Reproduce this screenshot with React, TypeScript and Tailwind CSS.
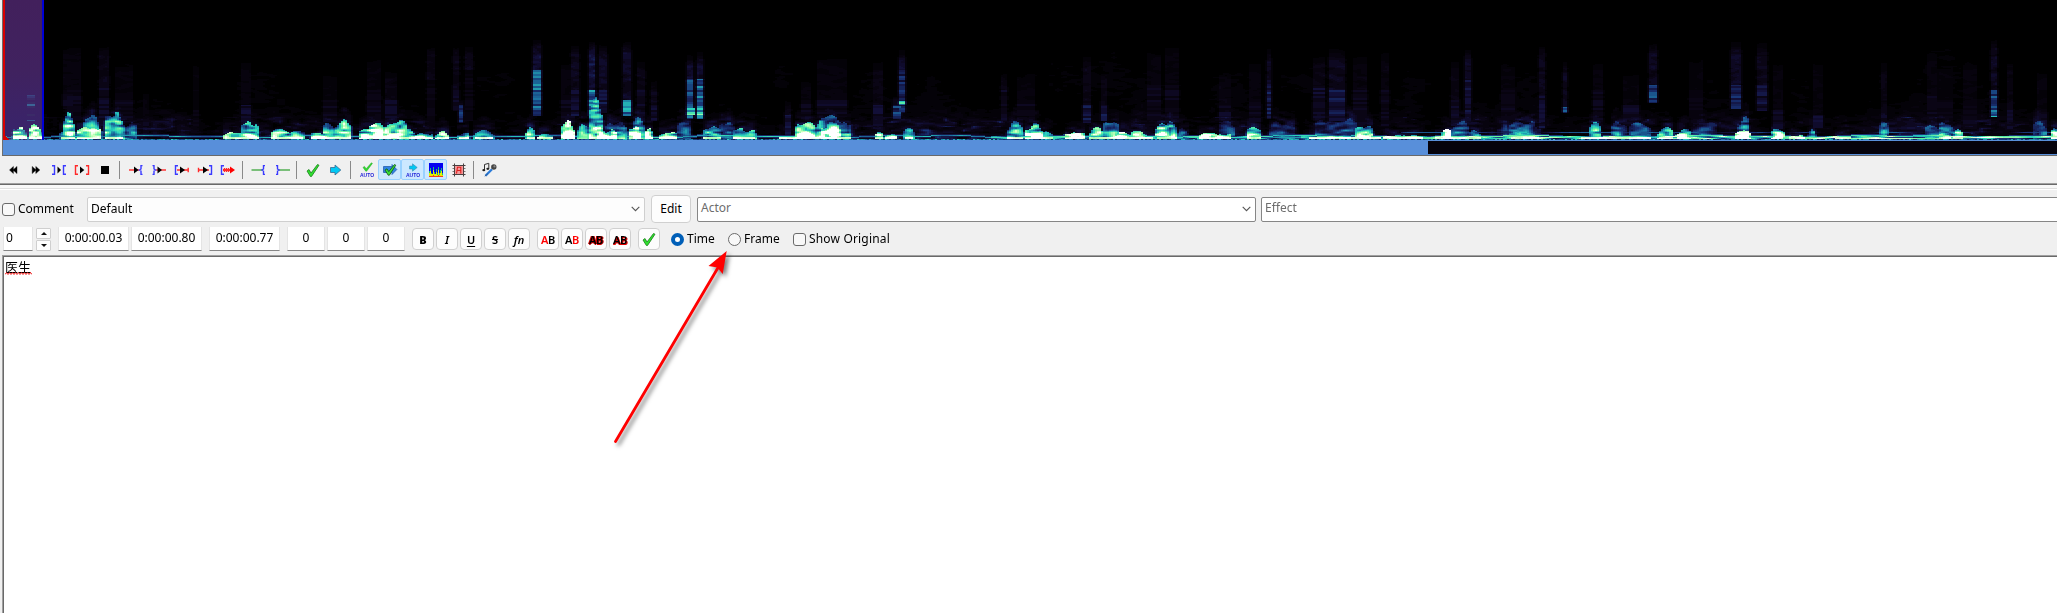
import React, { useMemo } from "react";
import { clsx } from "clsx";

/* ---------- spectrogram ---------- */

// [left, right, top, strength] of voiced bursts rising from the bottom edge
const BURSTS: number[][] = [
  [14, 26, 125, 1.1], [30, 41, 122, 1.25], [61, 75, 128, 0.85], [65, 73, 108, 0.85], [78, 100, 125, 1.1], [84, 98, 114, 0.6], [106, 123, 111, 0.72], [125, 136, 119, 0.5],
  [225, 242, 131, 1.2], [243, 258, 120, 0.85], [272, 288, 129, 0.9], [288, 303, 130, 0.8],
  [312, 324, 131, 1.1], [324, 334, 120, 0.8], [336, 350, 119, 0.85], [361, 372, 129, 1.1], [371, 381, 120, 1.2], [385, 405, 118, 0.95], [404, 413, 128, 0.8],
  [416, 431, 132, 1], [437, 448, 130, 0.9], [459, 468, 132, 0.9], [475, 493, 130, 0.65], [527, 534, 127, 0.9], [538, 552, 134, 0.9],
  [563, 573, 119, 1.15], [578, 588, 122, 0.6], [590, 602, 100, 0.75], [597, 604, 127, 1.2], [606, 616, 129, 1.4], [606, 623, 119, 0.45],
  [618, 627, 122, 0.6], [630, 640, 126, 1.2], [634, 644, 118, 0.55], [646, 652, 127, 1.2], [660, 676, 131, 1], [678, 690, 119, 0.42],
  [704, 720, 127, 0.7], [720, 733, 121, 0.45], [734, 755, 128, 0.9], [780, 850, 135, 0.9], [797, 813, 120, 0.9], [816, 849, 114, 0.65], [822, 840, 123, 1.35],
  [876, 882, 131, 1], [885, 896, 133, 1.1], [905, 913, 125, 0.65],
  [1008, 1022, 121, 0.65], [1026, 1042, 128, 1.2], [1032, 1040, 122, 0.9], [1043, 1052, 131, 0.8], [1066, 1084, 131, 1.3], [1090, 1101, 126, 0.95], [1104, 1118, 118, 0.6],
  [1102, 1152, 135, 1], [1118, 1128, 130, 1.2], [1132, 1144, 129, 0.85], [1157, 1174, 121, 0.95], [1166, 1176, 116, 0.65], [1179, 1188, 127, 0.45], [1200, 1230, 132, 1.3],
  [1220, 1234, 121, 0.42], [1248, 1260, 124, 0.8], [1270, 1294, 120, 0.36], [1316, 1355, 117, 0.42], [1310, 1380, 136, 0.9], [1356, 1372, 125, 0.95], [1384, 1422, 134, 0.75],
  [1442, 1450, 128, 1.4], [1451, 1468, 120, 0.45], [1436, 1468, 136, 1], [1470, 1480, 128, 0.75],
  [1498, 1510, 123, 0.35], [1511, 1540, 120, 0.48], [1511, 1538, 131, 0.85], [1591, 1600, 119, 0.75], [1612, 1626, 119, 0.45], [1630, 1650, 119, 0.5],
  [1582, 1650, 136, 1.1], [1659, 1672, 127, 0.95], [1678, 1689, 127, 1.15], [1693, 1715, 119, 0.38], [1737, 1749, 128, 1.45], [1739, 1748, 115, 0.5],
  [1773, 1783, 128, 0.9], [1790, 1804, 134, 0.9], [1809, 1815, 129, 0.6], [1836, 1851, 136, 1.2], [1881, 1888, 119, 0.5],
  [1926, 1936, 124, 0.5], [1938, 1953, 121, 0.5], [1940, 1950, 130, 1], [1954, 1962, 129, 0.85], [2034, 2046, 119, 0.45], [2052, 2058, 128, 0.9],
];

// [centre, half width, top, bottom, faint strength, hot top, hot strength]
const STREAKS: number[][] = [
  [31, 3, 60, 120, 0.22, 95, 0.36], [68, 4, 45, 108, 0.08, 90, 0.12], [74, 6, 45, 120, 0.09, 90, 0.12], [104, 5, 45, 125, 0.12, 85, 0.15], [124, 8, 60, 122, 0.07, 100, 0.12],
  [146, 3, 90, 135, 0.09, 120, 0.13], [196, 3, 60, 130, 0.06, 110, 0.1], [246, 4, 60, 125, 0.08, 105, 0.18], [330, 6, 70, 122, 0.06, 100, 0.12],
  [374, 6, 55, 122, 0.07, 90, 0.12], [391, 6, 70, 122, 0.1, 100, 0.16], [431, 4, 45, 125, 0.12, 80, 0.1], [456, 3, 45, 110, 0.12, 90, 0.15],
  [461, 2, 98, 122, 0.18, 105, 0.3], [469, 4, 45, 120, 0.12, 70, 0.1], [537, 3, 40, 115, 0.21, 70, 0.44], [568, 6, 60, 125, 0.08, 95, 0.12],
  [575, 3, 45, 115, 0.14, 90, 0.2], [592, 3, 42, 115, 0.24, 90, 0.5], [603, 3, 45, 112, 0.17, 90, 0.22], [627, 3, 42, 115, 0.17, 100, 0.48],
  [641, 3, 60, 120, 0.12, 90, 0.14], [654, 2, 80, 120, 0.12, 105, 0.18], [690.5, 3, 55, 118, 0.18, 79, 0.44], [700, 3, 52, 118, 0.18, 79, 0.44],
  [690.5, 4, 108, 114, 0.75, 108, 0.8], [700, 3, 106, 114, 0.7, 108, 0.66], [788, 2, 100, 135, 0.12, 115, 0.2], [806, 5, 75, 118, 0.07, 100, 0.12],
  [832, 14, 55, 116, 0.08, 100, 0.14], [878, 4, 60, 125, 0.1, 105, 0.18], [902, 3, 50, 112, 0.19, 70, 0.28], [902, 3, 101, 104, 0.6, 101, 0.65], [897, 3, 97, 118, 0.24, 105, 0.34],
  [1004, 2, 70, 120, 0.1, 90, 0.14], [1026, 8, 70, 120, 0.07, 100, 0.11], [1087, 3, 55, 122, 0.11, 105, 0.25], [1104, 3, 70, 120, 0.11, 105, 0.22],
  [1154, 7, 50, 125, 0.08, 85, 0.11], [1172, 6, 45, 122, 0.08, 85, 0.12], [1225, 6, 70, 122, 0.09, 105, 0.14], [1255, 6, 60, 125, 0.08, 100, 0.12],
  [1269, 2, 48, 118, 0.14, 80, 0.25], [1319, 6, 55, 120, 0.11, 85, 0.16], [1337, 7, 48, 120, 0.14, 90, 0.22], [1360, 7, 55, 125, 0.09, 90, 0.12],
  [1385, 4, 50, 125, 0.09, 90, 0.12], [1455, 4, 60, 125, 0.1, 100, 0.16], [1468, 3, 48, 120, 0.14, 80, 0.2], [1508, 7, 60, 125, 0.07, 90, 0.11],
  [1542, 2, 45, 128, 0.13, 95, 0.19], [1565, 2, 60, 112, 0.14, 107, 0.42], [1598, 5, 60, 125, 0.08, 90, 0.12], [1631, 8, 70, 125, 0.07, 105, 0.14],
  [1653, 4, 42, 102, 0.15, 85, 0.4], [1696, 7, 55, 125, 0.06, 90, 0.1], [1736, 4, 42, 108, 0.16, 85, 0.28], [1762, 4, 42, 110, 0.13, 85, 0.2],
  [1778, 4, 60, 128, 0.08, 110, 0.16], [1818, 4, 60, 128, 0.07, 115, 0.16], [1884, 3, 60, 135, 0.1, 115, 0.16], [1932, 4, 50, 128, 0.08, 95, 0.12],
  [1945, 7, 60, 125, 0.06, 100, 0.1], [1970, 6, 60, 128, 0.08, 105, 0.12], [1994, 3, 40, 116, 0.16, 90, 0.36], [1994, 3, 106, 116, 0.4, 110, 0.52],
  [2010, 3, 60, 128, 0.1, 110, 0.16], [2042, 5, 70, 128, 0.08, 110, 0.15],
];

const STOPS: [number, number, number, number][] = [
  [0, 0, 0, 0], [0.1, 9, 4, 18], [0.2, 18, 14, 54], [0.32, 24, 50, 116], [0.45, 28, 114, 160],
  [0.6, 40, 208, 190], [0.74, 106, 244, 160], [0.86, 205, 255, 190], [0.95, 255, 255, 255], [1, 255, 255, 255],
];

const LEVELS = 32;

function colourOf(v: number): string {
  let i = 1;
  while (i < STOPS.length - 1 && STOPS[i][0] < v) i++;
  const a = STOPS[i - 1];
  const b = STOPS[i];
  const t = Math.min(1, Math.max(0, (v - a[0]) / (b[0] - a[0])));
  const c = [1, 2, 3].map((k) => Math.round(a[k] + (b[k] - a[k]) * t));
  return `rgb(${c[0]},${c[1]},${c[2]})`;
}

function noise(a: number, b: number): number {
  let h = Math.imul(a + 71, 374761393) ^ Math.imul(b + 13, 668265263);
  h = Math.imul(h ^ (h >>> 13), 1274126177);
  return ((h ^ (h >>> 16)) >>> 0) / 4294967296;
}

function smooth(x: number, y: number, salt: number): number {
  const xi = Math.floor(x);
  const yi = Math.floor(y);
  const fx = x - xi;
  const fy = y - yi;
  const top = noise(xi + salt, yi) * (1 - fx) + noise(xi + 1 + salt, yi) * fx;
  const low = noise(xi + salt, yi + 1) * (1 - fx) + noise(xi + 1 + salt, yi + 1) * fx;
  return top * (1 - fy) + low * fy;
}

const CELL = 2;

function buildPaths(): string[] {
  const paths: string[] = Array.from({ length: LEVELS }, () => "");
  for (let x = 5; x < 2057; x += CELL) {
    const cx = x + 1;
    const bursts = BURSTS.filter((b) => cx >= b[0] - 6 && cx <= b[1] + 6);
    const voiced = bursts.some((b) => cx >= b[0] && cx <= b[1] && b[3] > 0.6);
    const streaks = STREAKS.filter((s) => Math.abs(cx - s[0]) <= s[1] + 2);
    let runLevel = 0;
    let runStart = 0;
    const flush = (y: number) => {
      if (runLevel > 0) paths[runLevel] += `M${x} ${runStart}h${CELL}V${y}h-${CELL}z`;
    };
    for (let y = 0; y < 140; y++) {
      const depth = y / 140;
      const cloud = smooth(x / 30, y / 40, 900);
      const grain = smooth(x / 7, y / 2.2, 300);
      let v = y > 45 ? 0.1 * depth * cloud * cloud * (0.3 + grain) : 0;
      if (y > 108) v += (0.24 * (y - 108) * cloud * grain) / 32;
      if (y > 116) {
        const wisp = smooth(x / 9, y / 1.8, 5000);
        if (wisp > 0.68) v += (wisp - 0.68) * 0.7 * cloud;
      }
      for (const s of streaks) {
        if (y < s[2] || y > s[3]) continue;
        const edge = Math.abs(cx - s[0]) <= s[1] ? 1 : 0.3;
        const fade = Math.min(1, (y - s[2]) / 14 + 0.2);
        const row = Math.floor(y / 2);
        const base = y >= s[5] ? s[6] * (0.55 + 0.65 * noise(Math.round(s[0]), row)) : s[4] * fade * (0.5 + 0.7 * grain);
        v = Math.max(v, base * edge);
      }
      for (const b of bursts) {
        const mid = (b[0] + b[1]) / 2;
        const half = (b[1] - b[0]) / 2;
        const d = Math.abs(cx - mid) / (half + 1);
        const contour = b[2] + (smooth(x / 4, b[2], 50) - 0.3 + 0.7 * d * d) * (140 - b[2]) * 0.4;
        const inside = d <= 1 ? 1 - 0.15 * d * d : Math.max(0, 0.5 - (d - 1) * 1.2);
        if (y >= contour) {
          const rise = 0.62 + (0.55 * (y - contour)) / Math.max(3, 140 - contour);
          v = Math.max(v, b[3] * inside * rise * (0.4 + 1.15 * grain));
        } else if (y >= contour - 14) {
          v = Math.max(v, 0.3 * inside * grain * (1 - (contour - y) / 18));
        }
      }
      // low-frequency hum along the bottom edge, denser towards the right
      if (y >= 131) {
        const line = 136 + Math.round(0.9 * Math.sin(x / 31) + 0.6 * Math.sin(x / 13));
        const near = Math.abs(y - line);
        const dense = x > 1400 ? 1.25 : x > 990 ? 1.1 : x > 560 && x < 850 ? 1.1 : 0.9;
        if (near < 1) v = Math.max(v, 0.58 * dense * (0.75 + 0.4 * smooth(x / 16, 2, 20)));
        else if (near < 2) v = Math.max(v, 0.26 * dense);
        if (y >= 136 && y < 139 && x > 990) v = Math.max(v, (x > 1300 ? 0.85 : 0.6) * smooth(x / 14, y, 66) + 0.14);
        if (x > 1400 && y === 132) v = Math.max(v, 0.5 * smooth(x / 22, 7, 10));
        if (y >= 137 && y < 139 && voiced) v = Math.max(v, 0.8 + 0.25 * grain);
        if (y === 139) v = 0.25 + 0.35 * noise(x, 9);
      }
      const level = Math.min(LEVELS - 1, Math.floor(Math.min(1, v) * LEVELS));
      if (level !== runLevel) {
        flush(y);
        runLevel = level;
        runStart = y;
      }
    }
    flush(140);
  }
  return paths;
}

function Spectrogram() {
  const paths = useMemo(buildPaths, []);
  return (
    <svg className="block h-[140px] w-[2055px] shrink-0" viewBox="2 0 2055 140" shapeRendering="crispEdges">
      <defs>
        <linearGradient id="selection" x1="0" y1="0" x2="0" y2="1">
          <stop offset="0" stopColor="#42205c" />
          <stop offset="0.5" stopColor="#40225f" />
          <stop offset="1" stopColor="#38246c" />
        </linearGradient>
      </defs>
      <rect x="2" y="0" width="2055" height="140" fill="#000" />
      {paths.map((d, i) =>
        d ? <path key={i} d={d} fill={colourOf((i + 0.5) / LEVELS)} /> : null
      )}
      <rect x="5" y="0" width="37" height="140" fill="url(#selection)" className="mix-blend-lighten" />
      <rect x="2" y="0" width="1" height="140" fill="#6e6e6e" />
      <path d="M3 0H5V135L9 140H3z" fill="#d80000" />
      <rect x="42" y="0" width="2" height="140" fill="#0000d8" />
    </svg>
  );
}

/* ---------- toolbar icons ---------- */

const BLUE = "#3a3aff";
const RED = "#ff2a2a";

function Icon({ children }: { children: React.ReactNode }) {
  return (
    <svg className="block h-4 w-4" viewBox="0 0 16 16" fill="none">
      {children}
    </svg>
  );
}

// square bracket opening towards dir
function Bracket({ x, dir, color }: { x: number; dir: 1 | -1; color: string }) {
  return <path d={`M${x + 3 * dir} 3.8H${x + 0.5 * dir}V12.2H${x + 3 * dir}`} stroke={color} strokeWidth="1.4" />;
}

// curly bracket whose nib points away from dir
function Brace({ x, dir, color }: { x: number; dir: 1 | -1; color: string }) {
  return (
    <path
      d={`M${x + 2 * dir} 3.6H${x + dir * 0.5}V7L${x - dir} 8L${x + dir * 0.5} 9V12.4H${x + 2 * dir}`}
      stroke={color}
      strokeWidth="1.4"
    />
  );
}

const tick = "M2 9L4 7.5L6 11L12.5 2.5L14 3.2L6.5 14.5H5.4z";

const ICONS: Record<string, React.ReactNode> = {
  back: <path d="M4.5 8L8.4 4.4V11.6zM8 8L12 4.4V11.6z" fill="#000" stroke="#000" strokeWidth=".4" />,
  forward: <path d="M8 8L4.2 4.4V11.6zM11.8 8L7.8 4.4V11.6z" fill="#000" stroke="#000" strokeWidth=".4" />,
  playOutside: (
    <>
      <Bracket x={4} dir={-1} color={BLUE} />
      <Bracket x={12} dir={1} color={BLUE} />
      <path d="M6.5 4.5L10 8L6.5 11.5z" fill="#000" />
    </>
  ),
  playInside: (
    <>
      <Bracket x={1} dir={1} color={RED} />
      <Bracket x={15} dir={-1} color={RED} />
      <path d="M6 4.5L10.3 8L6 11.5z" fill="#000" />
    </>
  ),
  stop: <rect x="4" y="4" width="8" height="8" fill="#000" />,
  beforeStart: (
    <>
      <path d="M1 8H11" stroke={RED} strokeWidth="1.4" />
      <path d="M6 4.5L10.5 8L6 11.5z" fill="#000" />
      <Brace x={12.5} dir={1} color={BLUE} />
    </>
  ),
  afterEnd: (
    <>
      <path d="M5 8H15" stroke={RED} strokeWidth="1.4" />
      <path d="M6.5 4.5L11 8L6.5 11.5z" fill="#000" />
      <Brace x={3.5} dir={-1} color={BLUE} />
    </>
  ),
  afterStart: (
    <>
      <Bracket x={1} dir={1} color={BLUE} />
      <path d="M3 8H14M14.2 5.8V10.2" stroke={RED} strokeWidth="1.4" />
      <path d="M6 4.5L11 8L6 11.5z" fill="#000" />
    </>
  ),
  beforeEnd: (
    <>
      <path d="M1.5 8H12M1.5 5.8V10.2" stroke={RED} strokeWidth="1.4" />
      <path d="M6 4.5L11 8L6 11.5z" fill="#000" />
      <Bracket x={15} dir={-1} color={BLUE} />
    </>
  ),
  toEnd: (
    <>
      <Bracket x={1} dir={1} color={BLUE} />
      <path d="M3 8H12" stroke={RED} strokeWidth="2.2" />
      <path d="M4.5 6V10M6.5 6V10M8.5 6V10" stroke={RED} strokeWidth="1.2" />
      <path d="M10 4.5L15 8L10 11.5z" fill="#ff0000" />
    </>
  ),
  leadIn: (
    <>
      <path d="M.5 8H11.5" stroke="#3aa53a" strokeWidth="1.3" />
      <Brace x={12} dir={1} color={BLUE} />
    </>
  ),
  leadOut: (
    <>
      <path d="M4.5 8H16" stroke="#3aa53a" strokeWidth="1.3" />
      <Brace x={4} dir={-1} color={BLUE} />
    </>
  ),
  commit: <path d={tick} fill="#2fe02f" stroke="#1b7c1b" strokeWidth=".8" />,
  next: <path d="M2.5 5.5H7V3L12.8 8L7 13V10.5H2.5z" fill="#00c8f4" stroke="#3a6a90" strokeWidth=".8" />,
  autoCommit: (
    <>
      <path d="M4 5.4L5.5 4.4L7.2 6.8L12.4 .8L13.4 1.4L7.6 9.2H6.8z" fill="#2fe02f" stroke="#2a9a2a" strokeWidth=".5" />
      <text x="8" y="15" textAnchor="middle" fill="#2222d8" fontSize="5" fontWeight="700" fontFamily="Liberation Sans, sans-serif">AUTO</text>
    </>
  ),
  commitNext: (
    <>
      <path d="M1.5 4.5H10V2.5L14.8 7.5L10 12.5V10.5H1.5z" fill="#2f86e4" stroke="#2a5fae" strokeWidth=".8" />
      <path d="M3 8L5 6.8L6.8 9.6L12.5 2.5L13.8 3.2L7.4 13.2H6.2z" fill="#38e038" stroke="#145214" strokeWidth=".8" />
    </>
  ),
  autoScroll: (
    <>
      <path d="M4.5 4H7.5V1.8L12.2 5.5L7.5 9.2V7H4.5z" fill="#00c8f4" stroke="#3a8ab0" strokeWidth=".6" />
      <text x="8" y="15" textAnchor="middle" fill="#2222d8" fontSize="5" fontWeight="700" fontFamily="Liberation Sans, sans-serif">AUTO</text>
    </>
  ),
  spectrum: (
    <g shapeRendering="crispEdges">
      <rect x="1" y="1" width="14" height="14" fill="#0000f0" />
      <path d="M1 15V9H2V6H3V11H4V12H5V5H6V10H7V12H8V7H9V11H10V5H11V11H12V8H13V6H14V11H15V15z" fill="#18c070" />
      <path d="M1 15V11H2V9H3V12H5V8H6V12H8V10H9V13H10V8H11V13H12V11H13V9H14V13H15V15z" fill="#e8f000" />
      <path d="M1 15V14H5V13H6V14H10V13H11V14H15V15z" fill="#f04020" />
    </g>
  ),
  crop: (
    <>
      <rect x="4" y="4" width="8" height="8" fill="#f49a9a" />
      <path d="M3.5 1.5V14.5M12.5 1.5V14.5M1.5 3.5H14.5M1.5 12.5H14.5" stroke="#4a4040" strokeWidth="1" />
      <path d="M1.5 6.5H3M1.5 9.5H3M13 6.5H14.5M13 9.5H14.5" stroke="#6a5a5a" strokeWidth=".8" />
      <path d="M5.5 11.5L6.5 5.2H9.8V11.5M6.2 8.5H9.8" stroke="#e02020" strokeWidth="1.1" />
    </>
  ),
  karaoke: (
    <>
      <path d="M2.5 8V2.5L6.8 1.3V6.5" stroke="#333" strokeWidth="1" />
      <ellipse cx="1.8" cy="8.2" rx="1.5" ry="1.1" fill="#222" />
      <ellipse cx="5.8" cy="6.8" rx="1.5" ry="1.1" fill="#222" />
      <path d="M3.5 13.8L10 7.2" stroke="#2a7ad8" strokeWidth="2.2" />
      <path d="M2.8 14.2L6 11.6" stroke="#2f5f9a" strokeWidth="1" />
      <circle cx="11.8" cy="5" r="2.7" fill="#444" />
      <circle cx="12.5" cy="4.4" r="1.1" fill="#8a8a8a" />
    </>
  ),
};

const TOOL_GROUPS: string[][] = [
  ["back", "forward", "playOutside", "playInside", "stop"],
  ["beforeStart", "afterEnd", "afterStart", "beforeEnd", "toEnd"],
  ["leadIn", "leadOut"],
  ["commit", "next"],
  ["autoCommit", "commitNext", "autoScroll", "spectrum", "crop"],
  ["karaoke"],
];

const ACTIVE = ["commitNext", "autoScroll", "spectrum"];

function Toolbar() {
  return (
    <div className="flex h-[27px] shrink-0 items-center pl-px">
      {TOOL_GROUPS.map((group, g) => (
        <React.Fragment key={g}>
          {g > 0 && <div className="ml-[3px] mr-[4px] h-[18px] w-px bg-[#8a8a8a]" />}
          {group.map((name) => (
            <button
              key={name}
              className={clsx(
                "flex h-[21px] w-[23px] items-center justify-center rounded-[2px] border",
                ACTIVE.includes(name) ? "border-[#99d1ff] bg-[#cce8ff]" : "border-transparent"
              )}
            >
              <Icon>{ICONS[name]}</Icon>
            </button>
          ))}
        </React.Fragment>
      ))}
    </div>
  );
}

/* ---------- edit box ---------- */

function Chevron() {
  return (
    <svg className="h-[6px] w-[9px]" viewBox="0 0 9 6" fill="none">
      <path d="M.7.9L4.5 4.7L8.3.9" stroke="#555" strokeWidth="1.1" />
    </svg>
  );
}

function Field({ value, className }: { value: string; className: string }) {
  return (
    <div className={clsx("flex h-[24px] shrink-0 items-center border-x border-b border-x-[#e4e4e4] border-b-[#868686] bg-white pb-px", className)}>
      {value}
    </div>
  );
}

function Tool({ children, className }: { children: React.ReactNode; className?: string }) {
  return (
    <button
      className={clsx(
        "flex h-[22px] w-[22px] items-center justify-center rounded-[4px] border border-[#d0d0d0] bg-[#fdfdfd] text-[11px] leading-none",
        className
      )}
    >
      {children}
    </button>
  );
}

function Spinner() {
  return (
    <div className="ml-[3px] flex w-[15px] flex-col gap-px">
      {["M0 4L3 1L6 4z", "M0 1L3 4L6 1z"].map((d) => (
        <button key={d} className="flex h-[11px] items-center justify-center rounded-[1px] border border-[#cfcfcf] bg-[#fdfdfd]">
          <svg className="h-[5px] w-[6px]" viewBox="0 0 6 5">
            <path d={d} fill="#111" />
          </svg>
        </button>
      ))}
    </div>
  );
}

function Box() {
  return <span className="h-[13px] w-[13px] shrink-0 rounded-[3px] border border-[#6a6a6a] bg-[#f8f8f8]" />;
}

export default function App() {
  return (
    <div className="relative flex h-[613px] w-[2057px] flex-col overflow-hidden bg-[#f0f0f0] font-['Noto_Sans','Noto_Sans_CJK_SC',sans-serif] text-[12px] leading-4 text-black">
      <div className="ml-[2px] flex shrink-0 flex-col">
        <Spectrogram />
        <div className="h-[15px] border-l border-[#6e6e6e] bg-[#588fda] pb-px pt-px">
          <div className="ml-[1425px] h-[13px] bg-[#05030c]" />
        </div>
        <div className="h-px bg-[#696969]" />
      </div>

      <Toolbar />
      <div className="h-px shrink-0 bg-[#a0a0a0]" />
      <div className="h-px shrink-0 bg-[#696969]" />
      <div className="h-[3px] shrink-0 bg-[#f8f8f8]" />
      <div className="h-px shrink-0 bg-[#e0e0e0]" />
      <div className="h-px shrink-0 bg-white" />

      <div className="mt-[5px] flex h-[28px] shrink-0 items-center">
        <label className="flex w-[87px] shrink-0 items-center gap-[3px] pl-[2px]">
          <Box />
          Comment
        </label>
        <div className="flex h-[25px] w-[558px] shrink-0 items-center justify-between rounded-[2px] border border-[#cfcfcf] bg-[#fdfdfd] pl-[3px] pr-[4px]">
          Default
          <Chevron />
        </div>
        <button className="ml-[6px] h-[28px] w-[40px] shrink-0 rounded-[4px] border border-[#d0d0d0] bg-[#fdfdfd]">Edit</button>
        <div className="ml-[6px] flex h-[25px] w-[559px] shrink-0 items-center justify-between rounded-[2px] border border-[#868686] bg-white pl-[3px] pr-[4px] text-[#6d6d6d]">
          <span className="pb-[2px]">Actor</span>
          <Chevron />
        </div>
        <div className="ml-[5px] flex h-[25px] w-[810px] shrink-0 items-center rounded-[2px] border border-[#868686] bg-white pl-[3px] text-[#6d6d6d]">
          <span className="pb-[2px]">Effect</span>
        </div>
      </div>

      <div className="mt-[3px] flex h-[26px] shrink-0 items-center pl-[3px]">
        <Field value="0" className="w-[30px] pl-[2px]" />
        <Spinner />
        <Field value="0:00:00.03" className="ml-[7px] w-[71px] justify-center" />
        <Field value="0:00:00.80" className="ml-[2px] w-[71px] justify-center" />
        <Field value="0:00:00.77" className="ml-[7px] w-[71px] justify-center" />
        <Field value="0" className="ml-[7px] w-[38px] justify-center" />
        <Field value="0" className="ml-[2px] w-[38px] justify-center" />
        <Field value="0" className="ml-[2px] w-[38px] justify-center" />

        <div className="ml-[7px] flex gap-[2px]">
          <Tool className="font-black">B</Tool>
          <Tool className="font-semibold italic">I</Tool>
          <Tool className="font-semibold underline underline-offset-2">U</Tool>
          <Tool className="font-semibold line-through">S</Tool>
          <Tool className="font-semibold italic">fn</Tool>
        </div>
        <div className="ml-[7px] flex gap-[2px]">
          <Tool className="font-semibold tracking-[-0.4px]"><span className="text-[#ff0000]">A</span>B</Tool>
          <Tool className="font-semibold tracking-[-0.4px]">A<span className="text-[#ff0000]">B</span></Tool>
          <Tool className="font-semibold tracking-[-0.4px] [text-shadow:1px_0_#d00000,-1px_0_#d00000,0_1px_#d00000]">AB</Tool>
          <Tool className="font-semibold tracking-[-0.4px] [text-shadow:1px_1px_#e00000,0_1px_#e00000]">AB</Tool>
        </div>
        <Tool className="ml-[7px]">
          <Icon>{ICONS.commit}</Icon>
        </Tool>

        <label className="ml-[11px] flex w-[57px] items-center gap-[3px]">
          <span className="h-[13px] w-[13px] rounded-full border-[4px] border-[#005fb8] bg-white" />
          Time
        </label>
        <label className="flex w-[65px] items-center gap-[3px]">
          <span className="h-[13px] w-[13px] rounded-full border border-[#6a6a6a] bg-[#f8f8f8]" />
          Frame
        </label>
        <label className="flex items-center gap-[3px] tracking-[0.17px]">
          <Box />
          Show Original
        </label>
      </div>

      <div className="ml-[2px] mt-[3px] flex-1 border-l border-t border-[#a0a0a0]">
        <div className="h-full border-l border-t border-[#696969] bg-white pl-px pt-[3px]">
          <span className="block w-[27px] whitespace-nowrap text-[13px] leading-[15px]">医生</span>
          <svg className="-mt-[3px] block h-[3px] w-[27px]" viewBox="0 0 27 3" fill="none">
            <path d="M0 2.5L1.5 .5L3 2.5L4.5 .5L6 2.5L7.5 .5L9 2.5L10.5 .5L12 2.5L13.5 .5L15 2.5L16.5 .5L18 2.5L19.5 .5L21 2.5L22.5 .5L24 2.5L25.5 .5L27 2.5" stroke="#f00000" strokeWidth=".9" />
          </svg>
        </div>
      </div>

      <svg className="absolute left-[600px] top-[240px] h-[220px] w-[150px] drop-shadow-[3px_3px_2px_rgba(0,0,0,0.5)]" viewBox="600 240 150 220">
        <path d="M615.5 441.5L719 266" stroke="#ff0000" strokeWidth="2.8" strokeLinecap="round" />
        <path d="M726.7 251L708.5 266L717.5 267.5L722.7 274z" fill="#ff0000" />
      </svg>
    </div>
  );
}
